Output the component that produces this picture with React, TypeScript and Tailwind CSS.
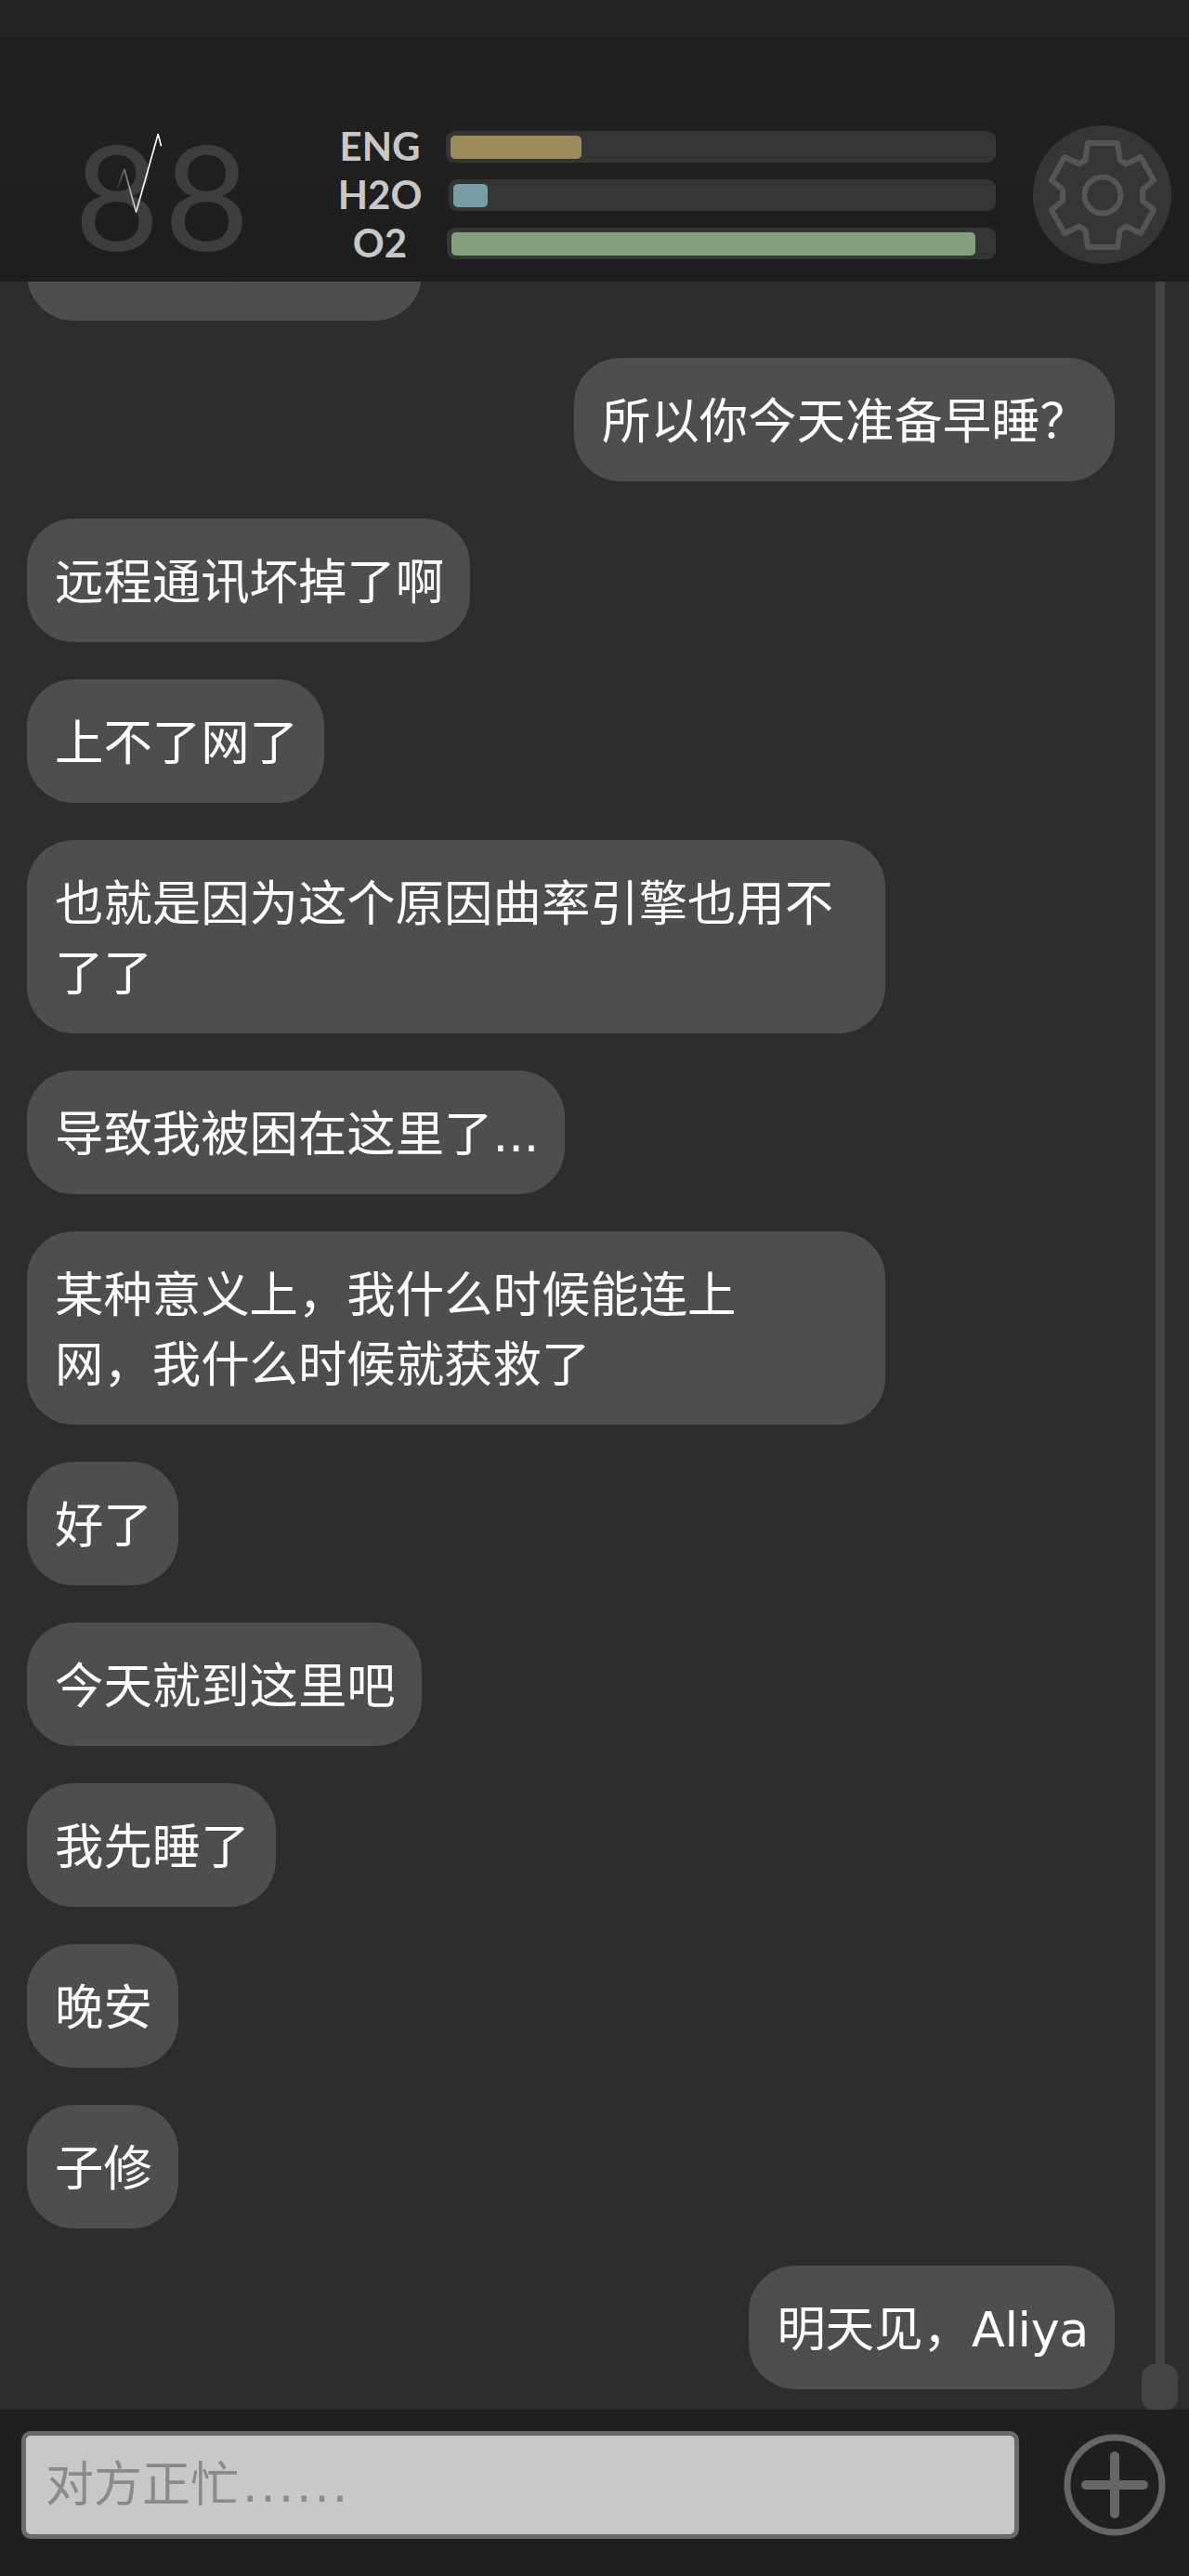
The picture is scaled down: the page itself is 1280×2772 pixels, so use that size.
import React from "react";

const gearPath =
  "M-16,-56 L16,-56 L18.5,-38 L25,-33.5 L41,-41 L55,-16 L43,-6 L43,6 L55,16 L41,41 L25,33.5 L18.5,38 L16,56 L-16,56 L-18.5,38 L-25,33.5 L-41,41 L-55,16 L-43,6 L-43,-6 L-55,-16 L-41,-41 L-25,-33.5 L-18.5,-38 Z";

function StatRow({
  label,
  offset,
  fill,
  width,
}: {
  label: string;
  offset: string;
  fill: string;
  width: number;
}) {
  return (
    <div className="flex h-[34px] items-center">
      <span className="w-[98px] -translate-y-px text-center font-[family-name:Lato,sans-serif] text-[42px] leading-none font-bold text-[#c8c8c8]">
        {label}
      </span>
      <div className={`flex h-[34px] flex-1 items-center rounded-[9px] bg-[#353535] px-[5px] ${offset}`}>
        <div className={`h-[25px] rounded-[5px] ${fill}`} style={{ width }} />
      </div>
    </div>
  );
}

function Bubble({ children, mine, wide }: { children: React.ReactNode; mine?: boolean; wide?: boolean }) {
  return (
    <div
      className={`rounded-[50px] bg-[#4e4e4e] pt-[31px] pr-[28px] pb-[27px] pl-[30px] text-[52.4px] leading-[75px] text-white ${
        mine ? "self-end" : "self-start"
      } ${wide ? "w-[924px]" : ""}`}
    >
      {children}
    </div>
  );
}

export default function App() {
  return (
    <div className="flex h-[2772px] w-[1280px] flex-col overflow-hidden bg-[#2d2d2d] font-[family-name:'DejaVu_Sans','Noto_Sans_CJK_SC',sans-serif]">
      <header className="relative z-10 flex h-[303px] shrink-0 items-start bg-linear-to-b from-[#222222] to-[#1e1e1e]">
        <div className="mt-[124px] ml-[80px] w-[280px] font-[family-name:Lato,sans-serif] text-[158px] leading-[170px] tracking-[5px] text-[#3e3e3e]">
          88
        </div>
        {/* heart-rate trace drawn over the counter */}
        <svg className="absolute top-[140px] left-[120px]" width="60" height="95" viewBox="0 0 60 95" fill="none">
          <defs>
            <linearGradient id="trace" gradientUnits="userSpaceOnUse" x1="6" y1="0" x2="32" y2="0">
              <stop offset="0" stopColor="#ffffff" stopOpacity="0.08" />
              <stop offset="1" stopColor="#ffffff" />
            </linearGradient>
          </defs>
          <polyline
            points="6.5,61.7 13.9,42.3 26.5,88.3 50.2,4.3 53.5,17.3"
            stroke="url(#trace)"
            strokeWidth="1.6"
            strokeLinejoin="round"
          />
        </svg>
        <div className="mt-[141px] flex w-[712px] flex-col gap-[18px]">
          <StatRow label="ENG" offset="ml-[22px]" fill="bg-[#9c8c5c]" width={141} />
          <StatRow label="H2O" offset="ml-[25px]" fill="bg-[#7a9ca6]" width={37} />
          <StatRow label="O2" offset="ml-[23px]" fill="bg-[#85a07c]" width={564} />
        </div>
        <button className="mt-[135px] ml-[40px] flex h-[149px] w-[149px] items-center justify-center rounded-full bg-[#363636]">
          <svg width="124" height="124" viewBox="-62 -62 124 124" fill="none" stroke="#555555" strokeWidth="6" strokeLinejoin="round">
            <path d={gearPath} />
            <circle r="19.5" />
          </svg>
        </button>
      </header>

      <main className="flex min-h-0 flex-1">
        <div className="flex min-w-0 flex-1 flex-col justify-end gap-[40px] overflow-hidden pr-[29px] pb-[22px] pl-[29px]">
          <div className="h-[133px] w-[425px] shrink-0 self-start rounded-[50px] bg-[#4e4e4e]" />
          <Bubble mine>所以你今天准备早睡？</Bubble>
          <Bubble>远程通讯坏掉了啊</Bubble>
          <Bubble>上不了网了</Bubble>
          <Bubble wide>
            也就是因为这个原因曲率引擎也用不
            <br />
            了了
          </Bubble>
          <Bubble>导致我被困在这里了...</Bubble>
          <Bubble wide>
            某种意义上，我什么时候能连上
            <br />
            网，我什么时候就获救了
          </Bubble>
          <Bubble>好了</Bubble>
          <Bubble>今天就到这里吧</Bubble>
          <Bubble>我先睡了</Bubble>
          <Bubble>晚安</Bubble>
          <Bubble>子修</Bubble>
          <Bubble mine>
            明天见，<span className="tracking-[-0.4px]">Aliya</span>
          </Bubble>
        </div>
        <div className="mr-[12px] flex w-[39px] shrink-0 flex-col items-center">
          <div className="w-[10px] flex-1 bg-[#444444]" />
          <div className="h-[49px] w-[39px] rounded-t-[14px] rounded-b-[12px] bg-[#444444]" />
        </div>
      </main>

      <footer className="flex h-[179px] shrink-0 items-start bg-[#1f1f1f] pt-[23px] pl-[23px]">
        <div className="flex h-[116px] w-[1074px] items-center rounded-[10px] border-[5px] border-[#6a6a6a] bg-[#c8c8c8] pl-[21px] text-[52px] text-[#8a8a8a]">
          对方正忙<span className="ml-[4px] tracking-[2.8px]">......</span>
        </div>
        <svg className="mt-[3px] ml-[48px]" width="110" height="110" viewBox="0 0 110 110" fill="none" stroke="#666666" strokeLinecap="round">
          <circle cx="55" cy="55" r="51" strokeWidth="7" />
          <path d="M55 24 V86 M24 55 H86" strokeWidth="10" />
        </svg>
      </footer>
    </div>
  );
}
